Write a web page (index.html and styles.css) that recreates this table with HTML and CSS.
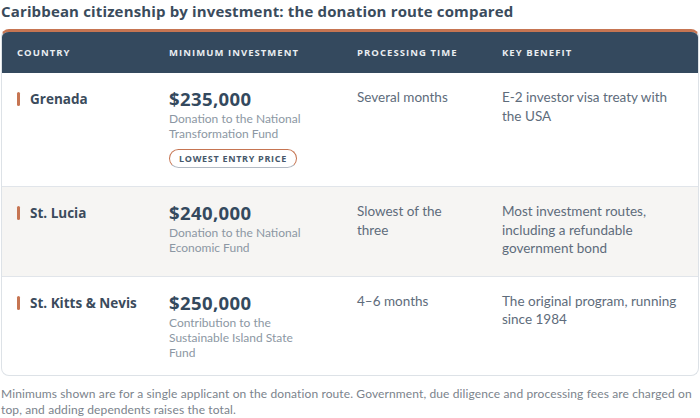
FILE: index.html
```html
<!DOCTYPE html>
<html lang="en">
<head>
<meta charset="utf-8">
<title>Caribbean citizenship by investment</title>
<link rel="stylesheet" href="styles.css">
</head>
<body>
<div class="page">
  <h1 class="title">Caribbean citizenship by investment: the donation route compared</h1>
  <div class="card">
    <div class="row head">
      <div class="cell">Country</div>
      <div class="cell">Minimum investment</div>
      <div class="cell">Processing time</div>
      <div class="cell">Key benefit</div>
    </div>
    <div class="row">
      <div class="cell country"><span class="mark"></span>Grenada</div>
      <div class="cell">
        <div class="amount">$235,000</div>
        <div class="desc">Donation to the National Transformation Fund</div>
        <span class="badge">Lowest entry price</span>
      </div>
      <div class="cell text time">Several months</div>
      <div class="cell text benefit">E-2 investor visa treaty with the USA</div>
    </div>
    <div class="row alt">
      <div class="cell country"><span class="mark"></span>St. Lucia</div>
      <div class="cell">
        <div class="amount">$240,000</div>
        <div class="desc">Donation to the National Economic Fund</div>
      </div>
      <div class="cell text time">Slowest of the three</div>
      <div class="cell text benefit">Most investment routes, including a refundable government bond</div>
    </div>
    <div class="row last">
      <div class="cell country"><span class="mark"></span>St. Kitts &amp; Nevis</div>
      <div class="cell">
        <div class="amount">$250,000</div>
        <div class="desc">Contribution to the Sustainable Island State Fund</div>
      </div>
      <div class="cell text time">4–6 months</div>
      <div class="cell text benefit">The original program, running since 1984</div>
    </div>
  </div>
  <p class="note">Minimums shown are for a single applicant on the donation route. Government, due diligence and processing fees are charged on top, and adding dependents raises the total.</p>
</div>
</body>
</html>
```

FILE: styles.css
```css
* { box-sizing: border-box; }
html, body { margin: 0; padding: 0; background: #ffffff; }
.page {
  width: 700px;
  padding: 0 1px;
  font-family: "Lato", "Open Sans", sans-serif;
}
.title {
  margin: 0;
  height: 29px;
  padding-top: 1px;
  font-family: "Open Sans", sans-serif;
  font-weight: 700;
  font-size: 15px;
  line-height: 20px;
  color: #3a4b5c;
  letter-spacing: 0.15px;
}
.card {
  border: 1px solid #dde2e7;
  border-top: 3px solid #c67552;
  border-radius: 8px;
  overflow: hidden;
  background: #ffffff;
}
.row {
  display: grid;
  grid-template-columns: 152px 188px 145px 1fr;
  border-bottom: 1px solid #e1e5ea;
}
.row.last { border-bottom: none; }
.row.alt { background: #f6f5f3; }
.row .cell { padding: 15px 15px 18px 15px; }
.row.last .cell { padding-bottom: 15px; }
.row.head {
  background: #34495e;
  border-bottom: none;
  height: 41px;
}
.row.head .cell {
  padding: 0 15px;
  display: flex;
  align-items: center;
  font-family: "Open Sans", sans-serif;
  font-weight: 700;
  font-size: 9.5px;
  letter-spacing: 1.05px;
  text-transform: uppercase;
  color: #e9edf1;
}
.country {
  display: flex;
  align-items: flex-start;
  font-family: "Open Sans", sans-serif;
  font-weight: 700;
  font-size: 13.5px;
  line-height: 22px;
  color: #3b4b5c;
}
.mark {
  width: 3px;
  height: 14px;
  border-radius: 2px;
  background: #c67552;
  margin: 4px 10px 0 0;
  flex: none;
}
.amount {
  font-family: "Open Sans", sans-serif;
  font-weight: 700;
  font-size: 18.5px;
  line-height: 22px;
  color: #34495e;
  letter-spacing: 0.4px;
}
.desc {
  max-width: 150px;
  font-size: 12px;
  line-height: 15px;
  color: #8c97a3;
  margin-top: 1px;
}
.badge {
  display: inline-block;
  margin-top: 8px;
  height: 19px;
  padding: 0 9px;
  border: 1px solid #c67552;
  border-bottom-color: #b3bac3;
  border-radius: 10px;
  font-family: "Open Sans", sans-serif;
  font-weight: 700;
  font-size: 9px;
  line-height: 17px;
  letter-spacing: 0.7px;
  text-transform: uppercase;
  color: #46576a;
}
.text {
  font-size: 13.5px;
  line-height: 18.5px;
  color: #5e6c7b;
  padding-top: 16px;
}
.time { padding-right: 30px; }
.benefit { padding-right: 14px; }
.note {
  margin: 10px 0 0;
  font-size: 12px;
  line-height: 16px;
  letter-spacing: 0.12px;
  color: #7b838c;
}
```
